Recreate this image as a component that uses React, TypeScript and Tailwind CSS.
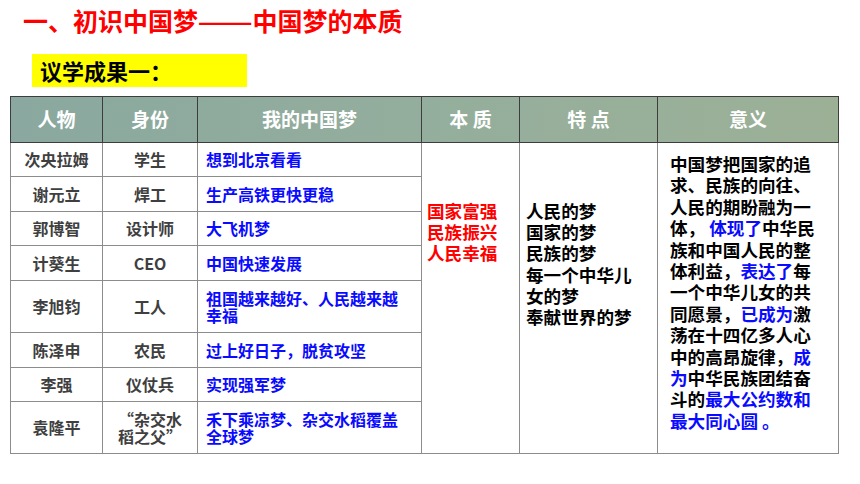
const font = { fontFamily: '"Noto Sans CJK SC", "Noto Sans", sans-serif' };

type Row = { name: string; role: string[]; dream: string[]; h: string };

const rows: Row[] = [
  { name: "次央拉姆", role: ["学生"], dream: ["想到北京看看"], h: "h-[34px]" },
  { name: "谢元立", role: ["焊工"], dream: ["生产高铁更快更稳"], h: "h-[35px]" },
  { name: "郭博智", role: ["设计师"], dream: ["大飞机梦"], h: "h-[34px]" },
  { name: "计葵生", role: ["CEO"], dream: ["中国快速发展"], h: "h-[35px]" },
  { name: "李旭钧", role: ["工人"], dream: ["祖国越来越好、人民越来越", "幸福"], h: "h-[52px]" },
  { name: "陈泽申", role: ["农民"], dream: ["过上好日子，脱贫攻坚"], h: "h-[35px]" },
  { name: "李强", role: ["仪仗兵"], dream: ["实现强军梦"], h: "h-[34px]" },
  { name: "袁隆平", role: ["“杂交水", "稻之父”"], dream: ["禾下乘凉梦、杂交水稻覆盖", "全球梦"], h: "h-[52px]" },
];

const B = "text-[#0a0aff]";

const meaning: React.ReactNode[] = [
  "中国梦把国家的追",
  "求、民族的向往、",
  "人民的期盼融为一",
  <>体， <span className={B}>体现了</span>中华民</>,
  "族和中国人民的整",
  <>体利益，<span className={B}>表达了</span>每</>,
  "一个中华儿女的共",
  <>同愿景，<span className={B}>已成为</span>激</>,
  "荡在十四亿多人心",
  <>中的高昂旋律，<span className={B}>成</span></>,
  <><span className={B}>为</span>中华民族团结奋</>,
  <>斗的<span className={B}>最大公约数和</span></>,
  <span className={B}>最大同心圆 。</span>,
];

const traits = ["人民的梦", "国家的梦", "民族的梦", "每一个中华儿", "女的梦", "奉献世界的梦"];

export default function App() {
  const head = "border border-[#3d3d3d] text-white font-bold text-[19px] text-center align-middle";
  const cell = "border border-[#8c8c8c] font-bold align-middle";
  return (
    <div className="w-[860px] h-[484px] bg-white overflow-hidden" style={font}>
      <div className="pl-[23px] pt-[8px] text-[25px] leading-[25px] font-bold text-[#ff0000] whitespace-nowrap">
        一、初识中国梦<span className="inline-block scale-x-[1.3] mx-[6px]">——</span>中国梦的本质
      </div>
      <div className="ml-[32px] mt-[21px] w-[215px] h-[33px] bg-[#ffff00] pl-[8px] text-[22px] leading-[33px] font-bold text-black">
        议学成果一：
      </div>
      <table className="ml-[10px] mt-[9px] border-collapse table-fixed w-[828px]">
        <colgroup>
          <col className="w-[92px]" />
          <col className="w-[95px]" />
          <col className="w-[224px]" />
          <col className="w-[98px]" />
          <col className="w-[138px]" />
          <col className="w-[181px]" />
        </colgroup>
        <thead>
          <tr className="h-[46px] bg-gradient-to-r from-[#8aa89f] via-[#94ae9d] to-[#9cb096]">
            <th className={head}>人物</th>
            <th className={head}>身份</th>
            <th className={head}>我的中国梦</th>
            <th className={head}>本 质</th>
            <th className={head}>特 点</th>
            <th className={head}>意义</th>
          </tr>
        </thead>
        <tbody>
          {rows.map((r, i) => (
            <tr key={r.name} className={r.h}>
              <td className={`${cell} text-center text-[16px] leading-[17px] text-[#3f3f3f]`}>{r.name}</td>
              <td className={`${cell} text-center text-[16px] leading-[17px] text-[#3f3f3f]`}>
                {r.role.map((t) => (
                  <div key={t}>{t}</div>
                ))}
              </td>
              <td className={`${cell} pl-[8px] text-[16px] leading-[17px] text-[#0a0aff]`}>
                {r.dream.map((t) => (
                  <div key={t}>{t}</div>
                ))}
              </td>
              {i === 0 ? (
                <>
                  <td rowSpan={8} className={`${cell} align-top pl-[5px] pt-[57px] text-[17.6px] leading-[21.2px] text-[#ff0000]`}>
                    <div>国家富强</div>
                    <div>民族振兴</div>
                    <div>人民幸福</div>
                  </td>
                  <td rowSpan={8} className={`${cell} align-top pl-[6px] pt-[57px] text-[17.6px] leading-[21.2px] text-black`}>
                    {traits.map((t) => (
                      <div key={t}>{t}</div>
                    ))}
                  </td>
                  <td rowSpan={8} className={`${cell} align-top pl-[12px] pt-[10px] text-[17.6px] leading-[21.4px] text-black whitespace-nowrap`}>
                    {meaning.map((t, k) => (
                      <div key={k}>{t}</div>
                    ))}
                  </td>
                </>
              ) : null}
            </tr>
          ))}
        </tbody>
      </table>
    </div>
  );
}
